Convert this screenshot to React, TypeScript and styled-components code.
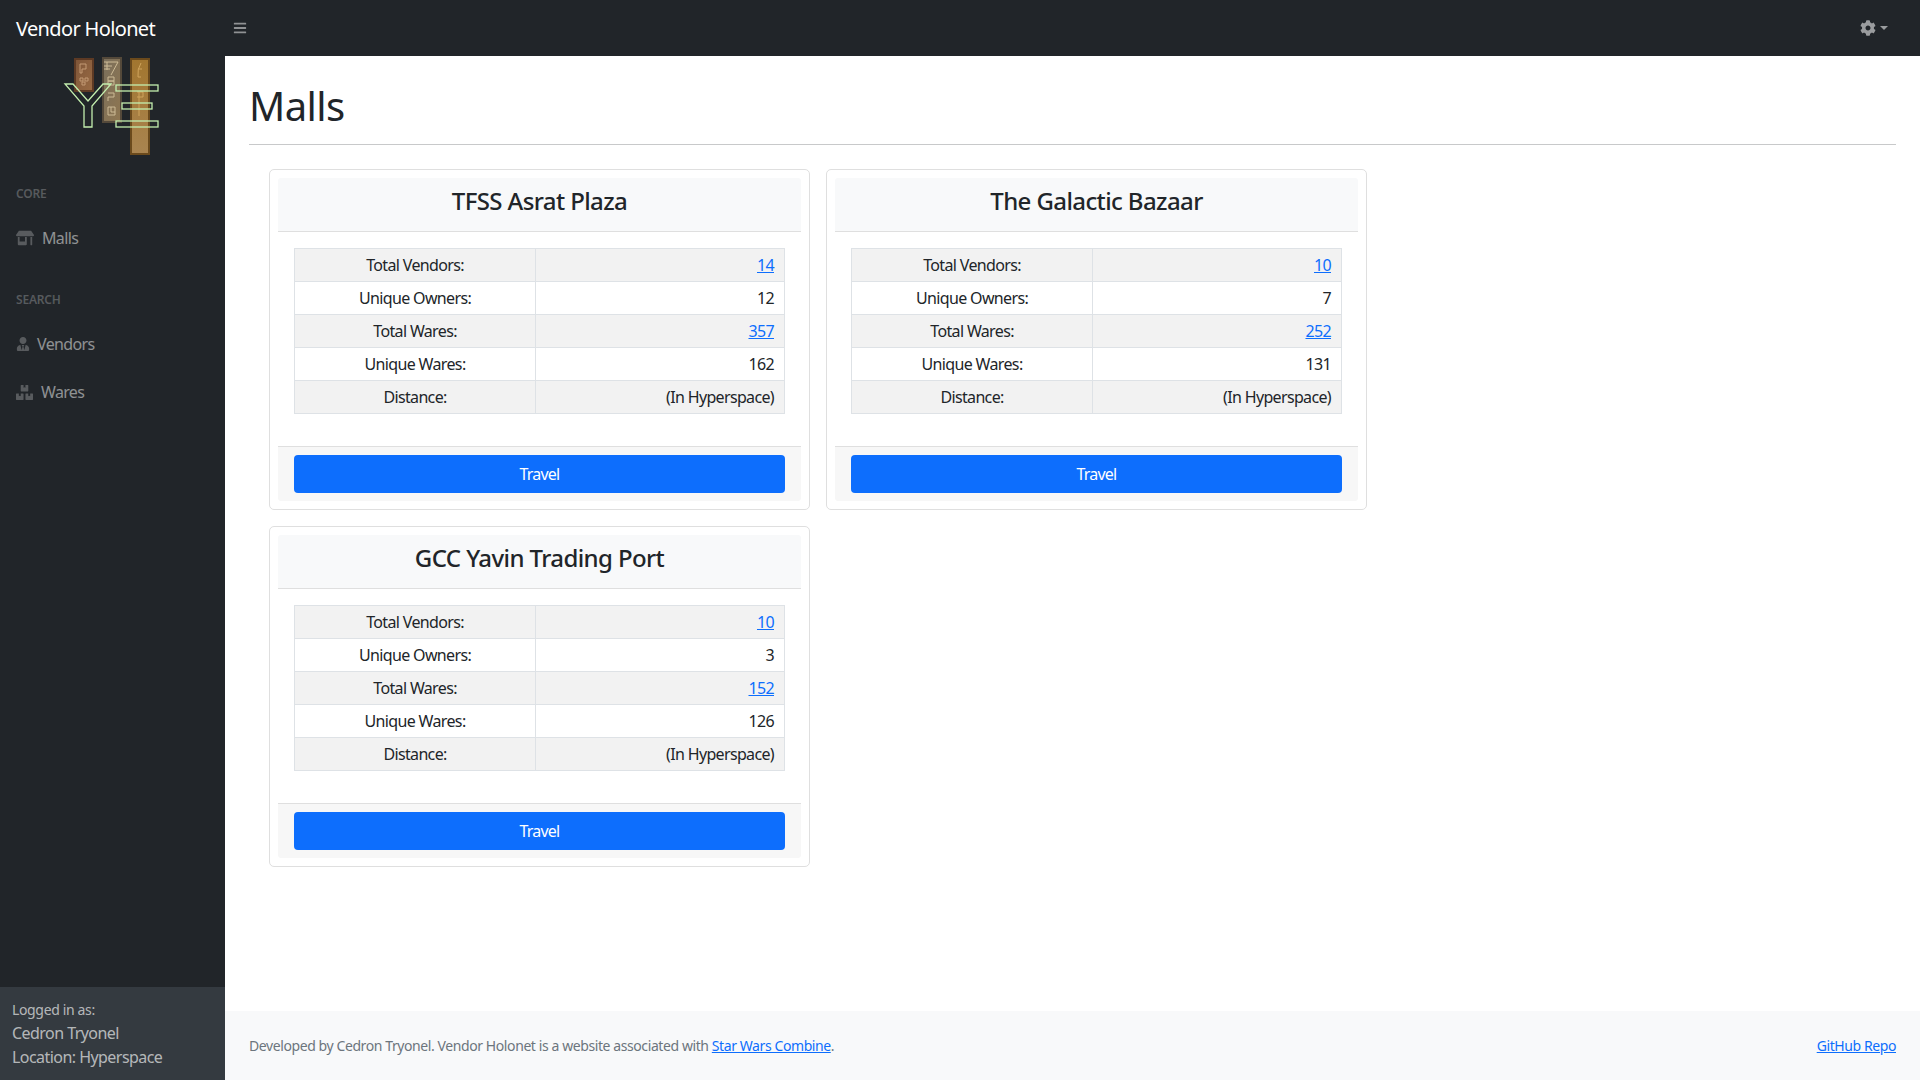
import styled, { createGlobalStyle } from "styled-components";
import { FaBars, FaBoxes, FaCog, FaStoreAlt, FaUserTie } from "react-icons/fa";

interface MallInfo {
  name: string;
  totalVendors: number;
  uniqueOwners: number;
  totalWares: number;
  uniqueWares: number;
}

const malls: MallInfo[] = [
  { name: "TFSS Asrat Plaza", totalVendors: 14, uniqueOwners: 12, totalWares: 357, uniqueWares: 162 },
  { name: "The Galactic Bazaar", totalVendors: 10, uniqueOwners: 7, totalWares: 252, uniqueWares: 131 },
  { name: "GCC Yavin Trading Port", totalVendors: 10, uniqueOwners: 3, totalWares: 152, uniqueWares: 126 },
];

const GlobalStyle = createGlobalStyle`
  * {
    box-sizing: border-box;
  }
  body {
    margin: 0;
    background: #fff;
    color: #212529;
    font-family: "Noto Sans", "Open Sans", sans-serif;
    font-size: 16px;
    line-height: 24px;
    letter-spacing: -0.65px;
  }
`;

const Logo = () => (
  <LogoSvg viewBox="0 0 120 110" width="120" height="110">
    <defs>
      <linearGradient id="brick1" x1="0" y1="0" x2="1" y2="1">
        <stop offset="0" stopColor="#7d5538" />
        <stop offset="1" stopColor="#9a6b44" />
      </linearGradient>
      <linearGradient id="brick2" x1="0" y1="0" x2="1" y2="1">
        <stop offset="0" stopColor="#7a6f5c" />
        <stop offset="1" stopColor="#8f7650" />
      </linearGradient>
      <linearGradient id="brick3" x1="0" y1="0" x2="0" y2="1">
        <stop offset="0" stopColor="#a2762f" />
        <stop offset="1" stopColor="#a98450" />
      </linearGradient>
    </defs>
    <g strokeWidth="2">
      <rect x="25" y="9" width="18" height="32" fill="url(#brick1)" stroke="#5d3a24" />
      <rect x="53" y="8" width="18" height="64" fill="url(#brick2)" stroke="#54493a" />
      <rect x="81" y="9" width="18" height="95" fill="url(#brick3)" stroke="#6b4a1c" />
    </g>
    <g fill="none" strokeWidth="1">
      <path stroke="#c39a74" d="M30 14h6v5h-4v4h-2zM30 28h3v3h-3zM35 28h3v3h-3zM32 32h3v3h-3z" />
      <path stroke="#cdbb96" d="M54 12h14l-7 13M54 16h8M54 19h6M57 12v8M58 27h6v4h-6zM58 31h6v4h-6zM58 43h6v4h-6v4M58 57h7v8h-7zM61 57v5h4" />
      <path stroke="#cfa45c" d="M91 13q-4 6-3 14h3M88 19h4M87 42h6v5h-6M89 42v24" />
    </g>
    <g fill="none" stroke="#c3eeae" strokeWidth="1.3">
      <path d="M15 34h8l15 17 15-17h8L42 56v21h-8V56z" />
      <rect x="66" y="35" width="42" height="6" />
      <rect x="72" y="53" width="30" height="6" />
      <rect x="66" y="71" width="42" height="6" />
    </g>
  </LogoSvg>
);

const MallCard = ({ name, totalVendors, uniqueOwners, totalWares, uniqueWares }: MallInfo) => {
  return (
    <Card>
      <CardHeader>{name}</CardHeader>
      <CardBody>
        <StatsTable>
          <tbody>
            <tr>
              <LabelCell>Total Vendors:</LabelCell>
              <ValueCell>
                <TableLink href="#">{totalVendors}</TableLink>
              </ValueCell>
            </tr>
            <tr>
              <LabelCell>Unique Owners:</LabelCell>
              <ValueCell>{uniqueOwners}</ValueCell>
            </tr>
            <tr>
              <LabelCell>Total Wares:</LabelCell>
              <ValueCell>
                <TableLink href="#">{totalWares}</TableLink>
              </ValueCell>
            </tr>
            <tr>
              <LabelCell>Unique Wares:</LabelCell>
              <ValueCell>{uniqueWares}</ValueCell>
            </tr>
            <tr>
              <LabelCell>Distance:</LabelCell>
              <ValueCell>(In Hyperspace)</ValueCell>
            </tr>
          </tbody>
        </StatsTable>
      </CardBody>
      <CardFooter>
        <TravelButton>Travel</TravelButton>
      </CardFooter>
    </Card>
  );
};

const App = () => {
  return (
    <>
      <GlobalStyle />
      <Page>
        <TopNav>
          <Brand>Vendor Holonet</Brand>
          <MenuToggle>
            <FaBars size={14} />
          </MenuToggle>
          <SettingsToggle>
            <FaCog size={16} />
            <Caret />
          </SettingsToggle>
        </TopNav>
        <Main>
          <Sidebar>
            <SidebarMenu>
              <Logo />
              <SectionHeading>CORE</SectionHeading>
              <NavItem>
                <NavIcon $width={26}>
                  <FaStoreAlt size={18} />
                </NavIcon>
                Malls
              </NavItem>
              <SectionHeading>SEARCH</SectionHeading>
              <NavItem>
                <NavIcon $width={21}>
                  <FaUserTie size={14} />
                </NavIcon>
                Vendors
              </NavItem>
              <NavItem>
                <NavIcon $width={25}>
                  <FaBoxes size={17} />
                </NavIcon>
                Wares
              </NavItem>
            </SidebarMenu>
            <SidebarFooter>
              <SmallLine>Logged in as:</SmallLine>
              <div>Cedron Tryonel</div>
              <div>Location: Hyperspace</div>
            </SidebarFooter>
          </Sidebar>
          <Content>
            <ContentInner>
              <Title>Malls</Title>
              <Divider />
              <CardGrid>
                {malls.map((mall) => (
                  <MallCard key={mall.name} {...mall} />
                ))}
              </CardGrid>
            </ContentInner>
            <Footer>
              <span>
                Developed by Cedron Tryonel. Vendor Holonet is a website associated with{" "}
                <TableLink href="#">Star Wars Combine</TableLink>.
              </span>
              <TableLink href="#">GitHub Repo</TableLink>
            </Footer>
          </Content>
        </Main>
      </Page>
    </>
  );
};

export default App;

const Page = styled.div`
  display: flex;
  flex-direction: column;
  height: 1080px;
  overflow: hidden;
`;

const TopNav = styled.nav`
  display: flex;
  align-items: center;
  height: 56px;
  flex: none;
  background: #212529;
`;

const Brand = styled.div`
  width: 225px;
  padding: 2px 0 0 16px;
  color: #fff;
  font-size: 20px;
`;

const MenuToggle = styled.button`
  display: flex;
  border: 0;
  padding: 0;
  margin-left: 8px;
  background: none;
  color: rgba(255, 255, 255, 0.5);
`;

const SettingsToggle = styled.div`
  display: flex;
  align-items: center;
  gap: 4px;
  margin-left: auto;
  margin-right: 32px;
  color: rgba(255, 255, 255, 0.55);
`;

const Caret = styled.span`
  width: 0;
  height: 0;
  border-top: 4px solid rgba(255, 255, 255, 0.55);
  border-left: 4px solid transparent;
  border-right: 4px solid transparent;
`;

const Main = styled.div`
  display: flex;
  flex: 1;
  min-height: 0;
`;

const Sidebar = styled.aside`
  display: flex;
  flex-direction: column;
  justify-content: space-between;
  width: 225px;
  flex: none;
  background: #212529;
  color: rgba(255, 255, 255, 0.5);
`;

const SidebarMenu = styled.div`
  display: flex;
  flex-direction: column;
`;

const LogoSvg = styled.svg`
  display: block;
  margin: -6px 0 -4px 50px;
`;

const SectionHeading = styled.div`
  padding: 29px 16px 11px;
  font-size: 12px;
  line-height: 18px;
  font-weight: 600;
  letter-spacing: -0.2px;
  color: rgba(255, 255, 255, 0.25);
`;

const NavItem = styled.a`
  display: flex;
  align-items: center;
  padding: 12px 16px;
  color: rgba(255, 255, 255, 0.5);
`;

const NavIcon = styled.span<{ $width: number }>`
  display: flex;
  align-items: center;
  width: ${({ $width }) => $width}px;
  color: rgba(255, 255, 255, 0.25);
`;

const SidebarFooter = styled.div`
  height: 93px;
  padding: 12px;
  background: #343a40;
  color: rgba(255, 255, 255, 0.65);
  letter-spacing: -0.55px;
`;

const SmallLine = styled.div`
  font-size: 14px;
  line-height: 22px;
  letter-spacing: -0.35px;
`;

const Content = styled.main`
  display: flex;
  flex-direction: column;
  justify-content: space-between;
  flex: 1;
  min-width: 0;
`;

const ContentInner = styled.div`
  padding: 0 24px;
`;

const Title = styled.h1`
  margin: 26px 0 0;
  font-size: 40px;
  line-height: 48px;
  font-weight: 400;
  letter-spacing: -0.6px;
`;

const Divider = styled.hr`
  margin: 14px 0 24px;
  border: 0;
  border-top: 1px solid #c8c9ca;
`;

const CardGrid = styled.div`
  display: grid;
  grid-template-columns: repeat(2, 541px);
  column-gap: 16px;
  row-gap: 16px;
  padding-left: 20px;
  align-items: start;
`;

const Card = styled.section`
  padding: 8px;
  border: 1px solid #dfdfdf;
  border-radius: 5px;
  background: #fff;
`;

const CardHeader = styled.h3`
  margin: 0;
  height: 54px;
  background: #f8f9fa;
  border-bottom: 1px solid #dfdfdf;
  border-radius: 3px 3px 0 0;
  text-align: center;
  font-size: 24px;
  line-height: 46px;
  font-weight: 500;
  letter-spacing: -0.6px;
`;

const CardBody = styled.div`
  padding: 16px 16px 32px;
`;

const StatsTable = styled.table`
  width: 100%;
  border-collapse: collapse;
  table-layout: fixed;

  tr:nth-child(odd) {
    background: #f2f2f2;
  }
`;

const LabelCell = styled.td`
  width: 49.2%;
  padding: 4px;
  border: 1px solid #dee2e6;
  text-align: center;
`;

const ValueCell = styled.td`
  padding: 4px 10px 4px 4px;
  border: 1px solid #dee2e6;
  text-align: right;
`;

const TableLink = styled.a`
  color: #0d6efd;
  text-decoration: underline;
`;

const CardFooter = styled.div`
  padding: 8px 16px;
  background: #f7f7f7;
  border-top: 1px solid #dfdfdf;
  border-radius: 0 0 3px 3px;
`;

const TravelButton = styled.button`
  display: block;
  width: 100%;
  height: 38px;
  border: 0;
  border-radius: 4px;
  background: #0d6efd;
  color: #fff;
  font: inherit;
  letter-spacing: -0.8px;
`;

const Footer = styled.footer`
  display: flex;
  align-items: center;
  justify-content: space-between;
  height: 69px;
  padding: 0 24px;
  background: #f8f9fa;
  color: #6c757d;
  font-size: 14px;
  letter-spacing: -0.41px;
`;
